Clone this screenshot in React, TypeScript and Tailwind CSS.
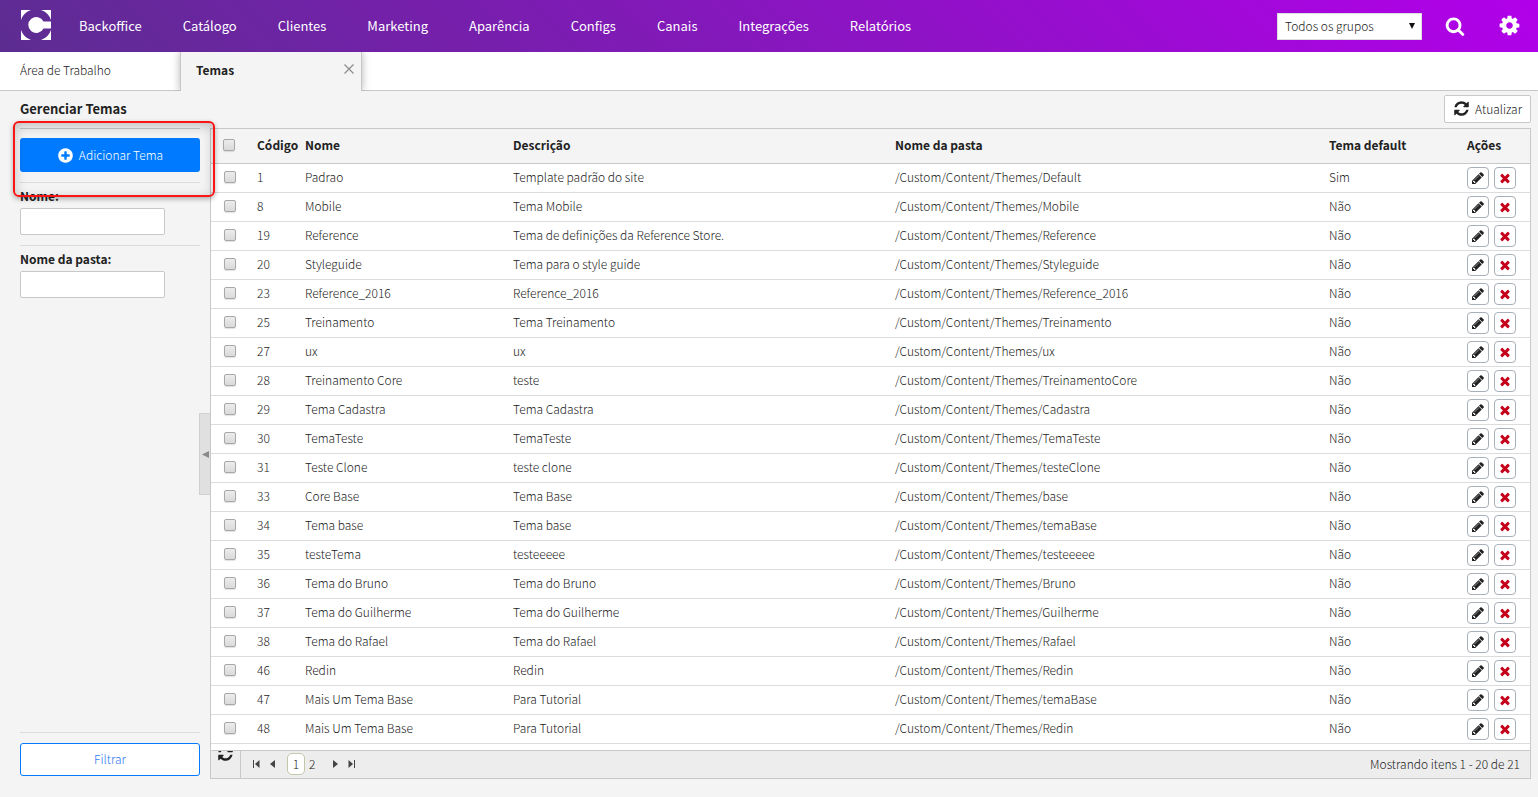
const FONT = "font-['Noto_Sans_CJK_SC','Open_Sans',sans-serif]"

const ICONS = {
  refresh:
    'M1639 1056q0 5-1 7-64 268-268 434.5t-478 166.5q-146 0-282.5-55t-243.5-157l-129 129q-19 19-45 19t-45-19-19-45v-448q0-26 19-45t45-19h448q26 0 45 19t19 45-19 45l-137 137q71 66 161 102t187 36q134 0 250-65t186-179q11-17 53-117 8-23 30-23h192q13 0 22.5 9.5t9.5 22.5zm25-800v448q0 26-19 45t-45 19h-448q-26 0-45-19t-19-45 19-45l138-138q-148-137-349-137-134 0-250 65t-186 179q-11 17-53 117-8 23-30 23h-199q-13 0-22.5-9.5t-9.5-22.5v-7q65-268 270-434.5t480-166.5q146 0 284 55.5t245 156.5l130-129q19-19 45-19t45 19 19 45z',
  cog: 'M1152 896q0-106-75-181t-181-75-181 75-75 181 75 181 181 75 181-75 75-181zm512-109v222q0 12-8 23t-20 13l-185 28q-19 54-39 91 35 50 107 138 10 12 10 25t-9 23q-27 37-99 108t-94 71q-12 0-26-9l-138-108q-44 23-91 38-16 136-29 186-7 28-36 28h-222q-14 0-24.5-8.5t-11.5-21.5l-28-184q-49-16-90-37l-141 107q-10 9-25 9-14 0-25-11-126-114-165-168-7-10-7-23 0-12 8-23 15-21 51-66.5t54-70.5q-27-50-41-99l-183-27q-13-2-21-12.5t-8-23.5v-222q0-12 8-23t19-13l186-28q14-46 39-92-40-57-107-138-10-12-10-24 0-10 9-23 26-36 98.5-107.5t94.5-71.5q13 0 26 10l138 107q44-23 91-38 16-136 29-186 7-28 36-28h222q14 0 24.5 8.5t11.5 21.5l28 184q49 16 90 37l142-107q9-9 24-9 13 0 25 10 129 119 165 170 7 8 7 22 0 12-8 23-15 21-51 66.5t-54 70.5q26 50 41 98l183 28q13 2 21 12.5t8 23.5z',
  pencil:
    'M491 1536l91-91-235-235-91 91v107h128v128h107zm523-928q0-22-22-22-10 0-17 7l-542 542q-7 7-7 17 0 22 22 22 10 0 17-7l542-542q7-7 7-17zm-54-192l416 416-832 832h-416v-416zm683 96q0 53-37 90l-166 166-416-416 166-165q36-38 90-38 53 0 91 38l235 234q37 39 37 91z',
  times:
    'M1490 1322q0 40-28 68l-136 136q-28 28-68 28t-68-28l-294-294-294 294q-28 28-68 28t-68-28l-136-136q-28-28-28-68t28-68l294-294-294-294q-28-28-28-68t28-68l136-136q28-28 68-28t68 28l294 294 294-294q28-28 68-28t68 28l136 136q28 28 28 68t-28 68l-294 294 294 294q28 28 28 68z',
  plus: 'M1344 960v-128q0-26-19-45t-45-19h-256v-256q0-26-19-45t-45-19h-128q-26 0-45 19t-19 45v256h-256q-26 0-45 19t-19 45v128q0 26 19 45t45 19h256v256q0 26 19 45t45 19h128q26 0 45-19t19-45v-256h256q26 0 45-19t19-45zm320-64q0 209-103 385.5t-279.5 279.5-385.5 103-385.5-103-279.5-279.5-103-385.5 103-385.5 279.5-279.5 385.5-103 385.5 103 279.5 279.5 103 385.5z',
  search:
    'M1216 832q0-185-131.5-316.5t-316.5-131.5-316.5 131.5-131.5 316.5 131.5 316.5 316.5 131.5 316.5-131.5 131.5-316.5zm512 832q0 52-38 90t-90 38q-54 0-90-38l-343-342q-179 124-399 124-143 0-273.5-55.5t-225-150-150-225-55.5-273.5 55.5-273.5 150-225 225-150 273.5-55.5 273.5 55.5 225 150 150 225 55.5 273.5q0 220-124 399l343 343q37 37 37 90z',
}

function Icon({ name, className }: { name: keyof typeof ICONS; className: string }) {
  return (
    <svg viewBox="0 0 1792 1792" fill="currentColor" aria-hidden="true" className={`shrink-0 ${className}`}>
      <path d={ICONS[name]} />
    </svg>
  )
}

const menu = ['Backoffice', 'Catálogo', 'Clientes', 'Marketing', 'Aparência', 'Configs', 'Canais', 'Integrações', 'Relatórios']

const themes = [
  { id: 1, name: 'Padrao', description: 'Template padrão do site', folder: 'Default', isDefault: true },
  { id: 8, name: 'Mobile', description: 'Tema Mobile', folder: 'Mobile' },
  { id: 19, name: 'Reference', description: 'Tema de definições da Reference Store.', folder: 'Reference' },
  { id: 20, name: 'Styleguide', description: 'Tema para o style guide', folder: 'Styleguide' },
  { id: 23, name: 'Reference_2016', description: 'Reference_2016', folder: 'Reference_2016' },
  { id: 25, name: 'Treinamento', description: 'Tema Treinamento', folder: 'Treinamento' },
  { id: 27, name: 'ux', description: 'ux', folder: 'ux' },
  { id: 28, name: 'Treinamento Core', description: 'teste', folder: 'TreinamentoCore' },
  { id: 29, name: 'Tema Cadastra', description: 'Tema Cadastra', folder: 'Cadastra' },
  { id: 30, name: 'TemaTeste', description: 'TemaTeste', folder: 'TemaTeste' },
  { id: 31, name: 'Teste Clone', description: 'teste clone', folder: 'testeClone' },
  { id: 33, name: 'Core Base', description: 'Tema Base', folder: 'base' },
  { id: 34, name: 'Tema base', description: 'Tema base', folder: 'temaBase' },
  { id: 35, name: 'testeTema', description: 'testeeeee', folder: 'testeeeee' },
  { id: 36, name: 'Tema do Bruno', description: 'Tema do Bruno', folder: 'Bruno' },
  { id: 37, name: 'Tema do Guilherme', description: 'Tema do Guilherme', folder: 'Guilherme' },
  { id: 38, name: 'Tema do Rafael', description: 'Tema do Rafael', folder: 'Rafael' },
  { id: 46, name: 'Redin', description: 'Redin', folder: 'Redin' },
  { id: 47, name: 'Mais Um Tema Base', description: 'Para Tutorial', folder: 'temaBase' },
  { id: 48, name: 'Mais Um Tema Base', description: 'Para Tutorial', folder: 'Redin' },
]

const checkbox =
  'block size-3 appearance-none rounded-[2px] border border-[#a8a8a8] bg-linear-to-b from-[#ececec] to-[#dadada] shadow-[0_1px_1px_rgba(0,0,0,0.12)] checked:from-[#7aa7e0] checked:to-[#3b78c9]'

function Header() {
  return (
    <header className="flex h-[52px] items-center bg-[linear-gradient(45deg,#5c2d91,#b200ea)] pr-[17px] pl-[21px] text-white">
      <a href="#" aria-label="Início" className="mr-7 pb-[2px]">
        <svg viewBox="0 0 30 30" className="size-[30px]" aria-hidden="true" fill="#fff">
          <path d="M0 0H10A16 16 0 0 0 0 10zM20 0H30V10A16 16 0 0 0 20 0zM0 20A16 16 0 0 0 10 30H0zM30 20V30H20A16 16 0 0 0 30 20z" />
          <path d="M30 11.500H22.500A8 8 0 1 0 22.500 18.500H30z" />
        </svg>
      </a>
      <nav className="flex items-center gap-[41px] text-[13px] leading-5">
        {menu.map((item) => (
          <a key={item} href="#" className="whitespace-nowrap">
            {item}
          </a>
        ))}
      </nav>
      <div className="ml-auto flex items-center">
        <div className="relative">
          <select
            aria-label="Grupo"
            className="block h-[27px] w-[145px] appearance-none border border-[#ddd] bg-white pr-6 pl-[7px] text-[12px] leading-5 font-light text-[#222]"
          >
            <option>Todos os grupos</option>
          </select>
          <svg viewBox="0 0 6 6" className="pointer-events-none absolute top-[10px] right-[7px] size-[6px]" aria-hidden="true">
            <path d="M0 0h6L3 6z" fill="#111" />
          </svg>
        </div>
        <button type="button" aria-label="Buscar" className="ml-[23px]">
          <Icon name="search" className="size-5" />
        </button>
        <button type="button" aria-label="Configurações" className="ml-[33px] pb-[2px]">
          <Icon name="cog" className="size-[23px]" />
        </button>
      </div>
    </header>
  )
}

function Tabs() {
  return (
    <div className="flex h-[39px] text-[12px] leading-5 text-[#222]">
      <a href="#" className="flex w-[180px] items-center border-b border-[#c8c8c8] bg-white pb-[2px] pl-5 font-light">
        Área de Trabalho
      </a>
      <div className="z-10 flex w-[182px] items-center justify-between border-x border-[#c8c8c8] bg-[#f4f4f4] pr-[7px] pb-[3px] pl-[15px] font-bold shadow-[0_0_8px_rgba(0,0,0,0.3)] [clip-path:inset(0_-10px)]">
        <a href="#">Temas</a>
        <button type="button" aria-label="Fechar aba" className="pb-[2px]">
          <svg viewBox="0 0 10 10" className="size-[10px]" aria-hidden="true">
            <path d="M0.500 0.500l9 9M9.500 0.500l-9 9" stroke="#8e8e8e" strokeWidth="1.300" />
          </svg>
        </button>
      </div>
      <div className="grow border-b border-[#c8c8c8] bg-white" />
    </div>
  )
}

function Sidebar() {
  return (
    <aside className="relative flex w-[210px] shrink-0 flex-col pr-[10px] pl-5 text-[12px] leading-4 text-[#222]">
      <div className="relative border-y border-t-[#c8c8c8] border-b-[#dcdcdc] pt-[9px] pb-[10px]">
        <button type="button" className="flex h-[34px] w-full items-center justify-center gap-[5px] rounded-[3px] bg-[#007bff] font-light text-white">
          <Icon name="plus" className="size-[17px]" />
          Adicionar Tema
        </button>
        <div className="pointer-events-none absolute -top-[8px] -right-[15px] -bottom-[15px] -left-[7px] z-20 rounded-[6px] border-2 border-[#fa1414] shadow-[0_2px_5px_rgba(0,0,0,0.3),inset_0_3px_12px_rgba(0,0,0,0.22)]" />
      </div>
      <form className="flex grow flex-col">
        <label htmlFor="nome" className="pt-[5px] font-bold">
          Nome:
        </label>
        <input id="nome" className="mt-1 h-[27px] w-[145px] rounded-[2px] border border-[#c8c8c8] bg-white px-2" />
        <label htmlFor="pasta" className="mt-[10px] border-t border-[#dcdcdc] pt-[5px] font-bold">
          Nome da pasta:
        </label>
        <input id="pasta" className="mt-1 h-[27px] w-[145px] rounded-[2px] border border-[#c8c8c8] bg-white px-2" />
        <div className="mt-auto border-t border-[#dcdcdc] pt-[10px] pb-[3px]">
          <button type="submit" className="h-[33px] w-full rounded-[3px] border border-[#007bff] bg-white pb-[2px] font-light text-[#2f7cf6]">
            Filtrar
          </button>
        </div>
      </form>
      <button
        type="button"
        aria-label="Recolher filtros"
        className="absolute top-[285px] right-0 flex h-[82px] w-[11px] items-center justify-center border border-r-0 border-[#d0d0d0] bg-[#e0e0e0]"
      >
        <svg viewBox="0 0 7 7" className="size-[7px]" aria-hidden="true">
          <path d="M7 0v7L0 3.500z" fill="#8a8a8a" />
        </svg>
      </button>
    </aside>
  )
}

function ThemesTable() {
  return (
    <table className="w-full table-fixed bg-white text-left text-[12px] leading-5 text-[#222]">
      <colgroup>
        <col className="w-[38px]" />
        <col className="w-[48px]" />
        <col className="w-[208px]" />
        <col className="w-[382px]" />
        <col />
        <col className="w-[138px]" />
        <col className="w-[71px]" />
      </colgroup>
      <thead>
        <tr className="h-[34px] border-b border-[#c8c8c8] bg-[#f4f4f4] whitespace-nowrap">
          <th className="pb-px pl-3">
            <input type="checkbox" aria-label="Selecionar todos" className={checkbox} />
          </th>
          <th className="pb-px pl-2">Código</th>
          <th className="pb-px pl-2">Nome</th>
          <th className="pb-px pl-2">Descrição</th>
          <th className="pb-px pl-2">Nome da pasta</th>
          <th className="pb-px pl-2">Tema default</th>
          <th className="pb-px pl-2">Ações</th>
        </tr>
      </thead>
      <tbody className="font-light">
        {themes.map((theme) => (
          <tr key={theme.id} className="h-[29px] border-b border-[#dcdcdc]">
            <td className="pb-[2px] pl-[13px]">
              <input type="checkbox" aria-label={`Selecionar ${theme.name}`} className={checkbox} />
            </td>
            <td className="pb-[2px] pl-2">{theme.id}</td>
            <td className="pb-[2px] pl-2">{theme.name}</td>
            <td className="pb-[2px] pl-2">{theme.description}</td>
            <td className="pb-[2px] pl-2">/Custom/Content/Themes/{theme.folder}</td>
            <td className="pb-[2px] pl-2">{theme.isDefault ? 'Sim' : 'Não'}</td>
            <td className="pl-2">
              <div className="flex gap-[5px]">
                <button type="button" aria-label="Editar" className="flex size-[22px] items-center justify-center rounded-[4px] border border-[#a9b0b8] bg-white">
                  <Icon name="pencil" className="size-[14px]" />
                </button>
                <button type="button" aria-label="Excluir" className="flex size-[22px] items-center justify-center rounded-[4px] border border-[#a9b0b8] bg-white text-[#c4001a]">
                  <Icon name="times" className="size-[14px]" />
                </button>
              </div>
            </td>
          </tr>
        ))}
      </tbody>
    </table>
  )
}

function Pager() {
  return (
    <div className="flex h-7 border-t border-[#c8c8c8] bg-[#ededed] text-[12px] leading-5 font-light text-[#222]">
      <button type="button" aria-label="Recarregar" className="flex w-[30px] items-start justify-center overflow-hidden border-r border-[#c8c8c8]">
        <Icon name="refresh" className="-mt-[6px] size-[17px]" />
      </button>
      <div className="flex grow items-center pr-[10px] pb-[2px] pl-3">
        <button type="button" aria-label="Primeira página">
          <svg viewBox="0 0 7 8" className="h-2 w-[7px]" fill="#444" aria-hidden="true">
            <path d="M0 0h1v8H0zM6.500 0v8L2 4z" />
          </svg>
        </button>
        <button type="button" aria-label="Página anterior" className="ml-[10px]">
          <svg viewBox="0 0 5 8" className="h-2 w-[5px]" fill="#444" aria-hidden="true">
            <path d="M5 0v8L0 4z" />
          </svg>
        </button>
        <button type="button" aria-current="page" className="ml-3 flex h-[22px] w-[18px] items-center justify-center rounded-[5px] border border-[#c5c8a8] bg-white">
          1
        </button>
        <button type="button" className="ml-1">
          2
        </button>
        <button type="button" aria-label="Próxima página" className="ml-[18px]">
          <svg viewBox="0 0 5 8" className="h-2 w-[5px]" fill="#444" aria-hidden="true">
            <path d="M0 0v8L5 4z" />
          </svg>
        </button>
        <button type="button" aria-label="Última página" className="ml-[10px]">
          <svg viewBox="0 0 7 8" className="h-2 w-[7px]" fill="#444" aria-hidden="true">
            <path d="M6 0h1v8H6zM0.500 0v8L5 4z" />
          </svg>
        </button>
        <span className="ml-auto">Mostrando itens 1 - 20 de 21</span>
      </div>
    </div>
  )
}

export default function App() {
  return (
    <div className={`flex min-h-screen flex-col bg-[#f4f4f4] ${FONT}`}>
      <Header />
      <Tabs />
      <main className="flex grow flex-col pb-[18px]">
        <div className="flex h-[37px] items-center justify-between pr-[7px] pb-[2px] pl-5 text-[#222]">
          <h1 className="text-[13px] leading-5 font-bold">Gerenciar Temas</h1>
          <button type="button" className="flex h-7 items-center gap-[5px] rounded-[2px] border border-[#c8c8c8] bg-white px-2 text-[12px] leading-5 font-light">
            <Icon name="refresh" className="size-[17px]" />
            Atualizar
          </button>
        </div>
        <div className="flex grow">
          <Sidebar />
          <section className="mr-[7px] flex min-w-0 grow flex-col border border-[#c8c8c8] bg-white">
            <ThemesTable />
            <div className="mt-auto pt-[6px]">
              <Pager />
            </div>
          </section>
        </div>
      </main>
    </div>
  )
}
